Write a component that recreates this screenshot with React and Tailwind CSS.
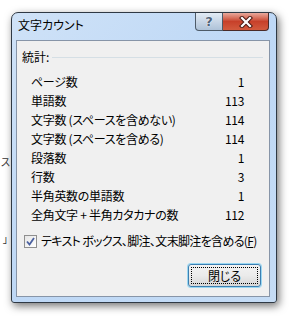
import React from 'react'

const rows = [
  ['ページ数', '1'],
  ['単語数', '113'],
  ['文字数 (スペースを含めない)', '114'],
  ['文字数 (スペースを含める)', '114'],
  ['段落数', '1'],
  ['行数', '3'],
  ['半角英数の単語数', '1'],
  ['全角文字 + 半角カタカナの数', '112'],
]

function CloseGlyph() {
  return (
    <svg width="14" height="12" viewBox="0 0 14 12">
      <path d="M3 2 L11 10 M11 2 L3 10" stroke="#4a1a14" strokeWidth="4.2" strokeLinecap="square" />
      <path d="M3 2 L11 10 M11 2 L3 10" stroke="#ffffff" strokeWidth="2.2" strokeLinecap="square" />
    </svg>
  )
}

function CheckBox() {
  return (
    <span className="shrink-0 w-[13px] h-[13px] border border-[#8f8f8f] bg-gradient-to-br from-[#e6e6e6] to-[#ffffff] flex items-center justify-center">
      <svg width="9" height="9" viewBox="0 0 9 9">
        <path d="M1 4.5 L3.5 7.5 L8 1" stroke="#4b61a0" strokeWidth="1.8" fill="none" />
      </svg>
    </span>
  )
}

export default function App() {
  return (
    <div
      className="relative w-[289px] h-[321px] bg-white overflow-hidden text-black text-[12px] [font-feature-settings:'palt']"
      style={{ fontFamily: '"Noto Sans CJK JP", "Noto Sans", sans-serif' }}
    >
      {/* fragments of the document behind */}
      <span className="absolute left-[1px] top-[155px] text-[10px] leading-[14px] text-[#333]">ス</span>
      <span className="absolute left-[3px] top-[233px] text-[10px] leading-[12px] text-[#333]">」</span>

      <div className="ml-[11px] mt-[12px] w-[266px] h-[291px] flex flex-col border border-[#2f3944] rounded-t-[7px] rounded-b-[3px] bg-gradient-to-br from-[#cfe2f7] via-[#bed8f6] to-[#c5dcf5] shadow-[2px_3px_9px_rgba(0,0,0,0.55)] relative">
        <div className="h-[27px] flex justify-between items-start">
          <span className="pl-[6px] pt-[5px] leading-[14px] text-[12px]">文字カウント</span>
          <div className="flex mr-[7px]">
            <div className="w-[28px] h-[18px] border border-t-0 border-[#4d5a68] rounded-bl-[4px] bg-gradient-to-b from-[#e2ebf5] via-[#c8d6e6] to-[#aec2d8] flex items-center justify-center">
              <span className="font-bold text-[13px] leading-[13px] text-[#4f6278] [text-shadow:0_0_1px_#ffffff,0_0_1px_#ffffff]" style={{ fontFamily: '"DejaVu Sans", sans-serif' }}>?</span>
            </div>
            <div className="w-[46px] h-[18px] border border-t-0 border-l-0 border-[#4a2a28] rounded-br-[4px] bg-gradient-to-b from-[#e8a99c] via-[#c7402a] to-[#d25a3e] flex items-center justify-center">
              <CloseGlyph />
            </div>
          </div>
        </div>

        <div className="flex-1 ml-[4px] mr-[6px] mb-[5px] border border-[#8795a8] bg-[#f0f0f0] flex flex-col">
          <div className="pl-[5px] pr-[6px] pt-[8px] flex items-center gap-[3px]">
            <span className="leading-[16px]">統計:</span>
            <span className="flex-1 h-px bg-[#d5dfe5] mt-[1px]" />
          </div>

          <div className="mt-[7px] pl-[14px] pr-[25px] flex flex-col tracking-[-0.3px]">
            {rows.map(([label, value]) => (
              <div key={label} className="h-[19px] flex justify-between items-center leading-[19px]">
                <span>{label}</span>
                <span>{value}</span>
              </div>
            ))}
          </div>

          <div className="mt-[9px] pl-[7px] flex items-center gap-[4px] h-[16px]">
            <CheckBox />
            <span className="leading-[16px] whitespace-nowrap tracking-[-0.65px]">
              テキスト ボックス、脚注、文末脚注を含める(<span className="underline">F</span>)
            </span>
          </div>

          <div className="mt-[15px] flex justify-end pr-[8px]">
            <button className="w-[73px] h-[23px] rounded-[3px] border border-[#3c7fb1] shadow-[0_0_0_1px_#9ad7f2] bg-gradient-to-b from-[#f2f2f2] via-[#ebebeb] to-[#d6d6d6] p-[2px]">
              <span className="w-full h-full flex items-center justify-center border border-dotted border-black leading-[14px]">閉じる</span>
            </button>
          </div>
        </div>
      </div>
    </div>
  )
}
